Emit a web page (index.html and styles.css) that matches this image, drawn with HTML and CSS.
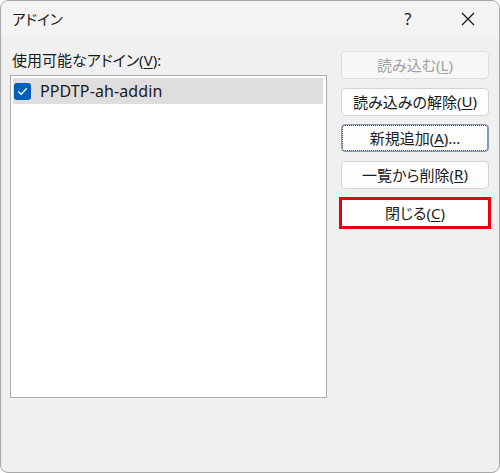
FILE: index.html
```html
<!DOCTYPE html>
<html lang="ja">
<head>
<meta charset="utf-8">
<link rel="stylesheet" href="styles.css">
</head>
<body>
<div class="window">
  <div class="titlebar">
    <span class="title">アドイン</span>
    <span class="help">?</span>
    <span class="close">
      <svg width="16" height="16" viewBox="0 0 16 16"><path d="M2 2 L14 14 M14 2 L2 14" stroke="#1a1a1a" stroke-width="1.3" fill="none"/></svg>
    </span>
  </div>
  <div class="content">
    <div class="left">
      <div class="label">使用可能なアドイン(<u>V</u>):</div>
      <div class="listbox">
        <div class="item selected">
          <span class="check">
            <svg width="17" height="17" viewBox="0 0 17 17"><path d="M4.5 8.8 L7.2 11.3 L12.4 5.8" stroke="#fff" stroke-width="1.3" fill="none" stroke-linecap="round" stroke-linejoin="round"/></svg>
          </span>
          <span class="itemtext">PPDTP-ah-addin</span>
        </div>
      </div>
    </div>
    <div class="buttons">
      <div class="btn disabled">読み込む(<u>L</u>)</div>
      <div class="btn">読み込みの解除(<u>U</u>)</div>
      <div class="btn focused">新規追加(<u>A</u>)...</div>
      <div class="btn">一覧から削除(<u>R</u>)</div>
      <div class="btn highlighted">閉じる(<u>C</u>)</div>
    </div>
  </div>
</div>
</body>
</html>
```

FILE: styles.css
```css
* { box-sizing: border-box; }
html, body { margin: 0; padding: 0; background: #ffffff; }
body {
  width: 500px;
  height: 473px;
  font-family: "Noto Sans", "Noto Sans CJK JP", sans-serif;
  font-feature-settings: "palt";
  color: #1a1a1a;
}
.window {
  width: 500px;
  height: 473px;
  background: #f0f0f0;
  border: 1px solid #a8a8a8;
  border-radius: 8px;
  overflow: hidden;
  display: flex;
  flex-direction: column;
}
.titlebar {
  height: 36px;
  display: flex;
  align-items: center;
  padding-left: 11px;
  background: #f3f3f3;
}
.title {
  font-size: 14.5px;
  flex: 1;
  padding-bottom: 1px;
}
.help {
  font-size: 16px;
  width: 20px;
  text-align: center;
  margin-right: 42px;
  padding-bottom: 1px;
}
.close {
  width: 16px;
  height: 16px;
  margin-right: 23px;
  display: flex;
}
.content {
  display: flex;
  padding: 0 0 0 9px;
}
.left {
  display: flex;
  flex-direction: column;
  width: 317px;
}
.label {
  font-size: 15px;
  height: 38px;
  line-height: 20px;
  padding-top: 13px;
  padding-left: 2px;
}
.listbox {
  width: 317px;
  height: 323px;
  background: #ffffff;
  border: 1px solid #adadad;
  padding: 2px 3px 2px 2px;
}
.item {
  height: 26px;
  display: flex;
  align-items: center;
  padding-left: 1px;
}
.item.selected { background: #dedede; }
.check {
  width: 17px;
  height: 17px;
  background: #005fb8;
  border-radius: 3px;
  display: flex;
}
.itemtext {
  font-size: 16px;
  margin-left: 9px;
  letter-spacing: 0.1px;
}
.buttons {
  margin-left: 14px;
  padding-top: 14px;
  display: flex;
  flex-direction: column;
  gap: 8.5px;
  width: 148px;
}
.btn {
  height: 28px;
  background: #fdfdfd;
  border: 1px solid #d3d3d3;
  border-radius: 4px;
  font-size: 15px;
  display: flex;
  align-items: center;
  justify-content: center;
  padding-bottom: 1px;
}
.btn u { text-underline-offset: 2px; text-decoration-thickness: 1px; }
.btn.disabled {
  color: #a2a2a2;
  background: #f7f7f7;
  border-color: #dedede;
}
.btn.focused {
  border-color: #7f9cc6;
  outline: 1px dotted #333;
  outline-offset: -2px;
}
.btn.highlighted {
  margin: 0 -2px;
  height: 32px;
  border: 3px solid #e8000b;
  border-radius: 0;
  background: #ffffff;
}
.label u { text-underline-offset: 2px; text-decoration-thickness: 1px; }
```
